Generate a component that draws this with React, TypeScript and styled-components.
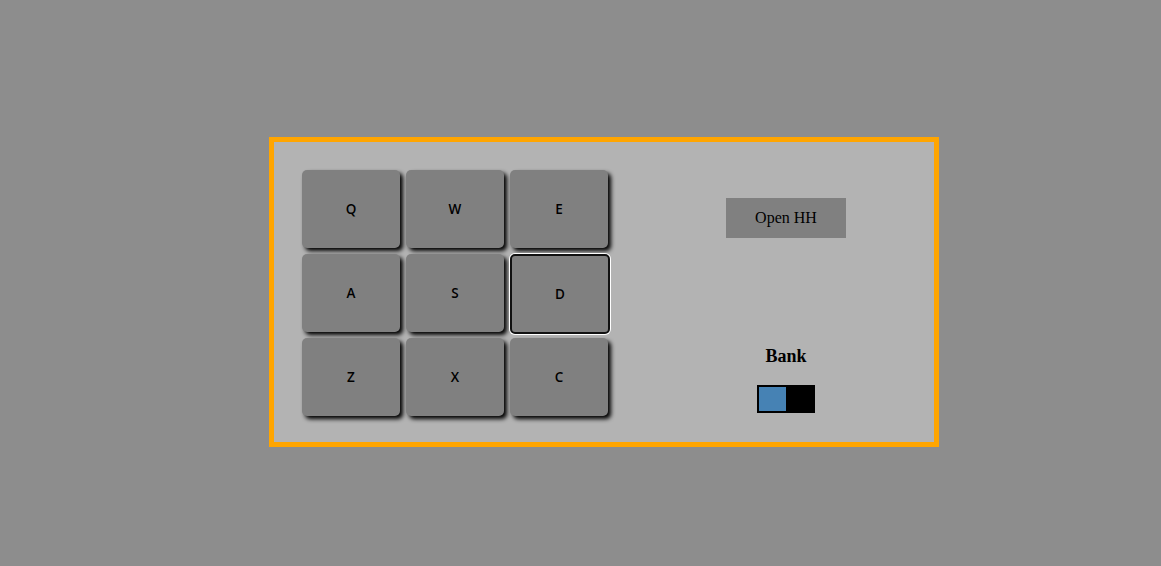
import React from "react";
import styled, { createGlobalStyle } from "styled-components";

const Global = createGlobalStyle`
  html, body { margin: 0; padding: 0; background: #8d8d8d; }
  body { font-family: "Liberation Serif", "Times New Roman", serif; }
`;

const Page = styled.div`
  width: 1161px;
  height: 566px;
  box-sizing: border-box;
  padding: 137px 0 0 269px;
  background: #8d8d8d;
`;

const Machine = styled.div`
  border: 5px solid #ffa500;
  background: #b3b3b3;
  display: flex;
  padding: 28px 0 0 28px;
  box-sizing: content-box;
  width: 632px;
  height: 272px;
`;

const PadGrid = styled.div`
  display: grid;
  grid-template-columns: repeat(3, 98px);
  grid-auto-rows: 78px;
  column-gap: 6px;
  row-gap: 6px;
  align-content: start;
`;

const Pad = styled.div<{ $active?: boolean }>`
  background: #808080;
  border-radius: 5px;
  display: flex;
  align-items: center;
  justify-content: center;
  font-family: "Open Sans", "Liberation Sans", sans-serif;
  font-weight: 600;
  font-size: 13.5px;
  color: #000;
  box-sizing: border-box;
  box-shadow: ${(p) =>
    p.$active ? "0 0 0 1px #ffffff" : "3px 3px 4px #000"};
  border: ${(p) => (p.$active ? "2px solid #111" : "none")};
  ${(p) => (p.$active ? "margin: 0 -2px -2px 0;" : "")}
`;

const Controls = styled.div`
  margin-left: 30px;
  width: 296px;
  display: flex;
  flex-direction: column;
  align-items: center;
`;

const Display = styled.div`
  margin-top: 28px;
  width: 120px;
  height: 40px;
  background: #808080;
  display: flex;
  align-items: center;
  justify-content: center;
  font-size: 16px;
  color: #000;
`;

const BankTitle = styled.div`
  margin-top: 108px;
  font-weight: bold;
  font-size: 18px;
  line-height: 21px;
  color: #000;
`;

const Toggle = styled.div`
  margin-top: 18px;
  width: 54px;
  height: 24px;
  padding: 2px;
  background: #000;
  display: flex;
`;

const Knob = styled.div<{ $on?: boolean }>`
  width: 27px;
  height: 24px;
  background: #4682b4;
  margin-left: ${(p) => (p.$on ? "27px" : "0")};
`;

const keys = ["Q", "W", "E", "A", "S", "D", "Z", "X", "C"];

export default function App() {
  return (
    <>
      <Global />
      <Page>
        <Machine>
          <PadGrid>
            {keys.map((k) => (
              <Pad key={k} $active={k === "D"}>
                {k}
              </Pad>
            ))}
          </PadGrid>
          <Controls>
            <Display>Open HH</Display>
            <BankTitle>Bank</BankTitle>
            <Toggle>
              <Knob />
            </Toggle>
          </Controls>
        </Machine>
      </Page>
    </>
  );
}
